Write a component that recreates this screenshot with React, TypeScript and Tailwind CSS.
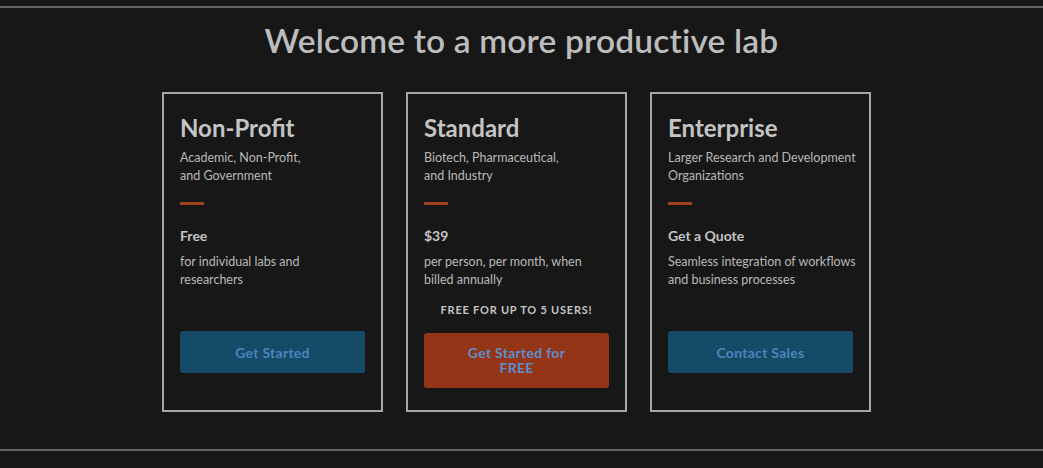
import React from "react";

const font = { fontFamily: "Lato, 'Noto Sans', sans-serif" };

function Card({
  title,
  sub,
  price,
  desc,
  extra,
  button,
  orange,
}: {
  title: string;
  sub: React.ReactNode;
  price: string;
  desc: React.ReactNode;
  extra?: string;
  button: React.ReactNode;
  orange?: boolean;
}) {
  return (
    <div className="w-[221px] h-[320px] border-2 border-[#a3a8a5] bg-[#171717] px-[16px] pt-[19px] flex flex-col">
      <h2 className="text-[24px] leading-[30px] font-bold text-[#c4c4c4]">{title}</h2>
      <p className="mt-[6px] text-[12.5px] leading-[18px] text-[#b9b9b9] whitespace-nowrap">{sub}</p>
      <div className="mt-[17px] h-[3px] w-[24px] bg-[#a3401f]" />
      <p className="mt-[21px] text-[14px] leading-[20px] font-bold text-[#c4c4c4]">{price}</p>
      <p className="mt-[7px] text-[12.5px] leading-[18px] text-[#b9b9b9] whitespace-nowrap">{desc}</p>
      {extra ? (
        <p className="mt-[13px] text-center text-[11px] leading-[16px] font-bold tracking-[0.07em] text-[#c4c4c4]">
          {extra}
        </p>
      ) : null}
      <button
        className={
          orange
            ? "mt-[15px] h-[55px] rounded-[3px] bg-[#943517] text-[#5b8fcc] font-bold text-[14px] leading-[14.5px] tracking-[0.02em] flex items-center justify-center text-center"
            : "mt-auto mb-[37px] h-[42px] rounded-[3px] bg-[#154b66] text-[#4a86bd] font-bold text-[14px] tracking-[0.02em]"
        }
      >
        <span>{button}</span>
      </button>
    </div>
  );
}

export default function App() {
  return (
    <div className="w-[1043px] h-[468px] bg-[#171717] overflow-hidden" style={font}>
      <div className="h-[6px]" />
      <div className="h-[2px] bg-[#5f6461]" />
      <h1 className="mt-[14px] text-center text-[33.5px] leading-[36px] font-semibold text-[#bdbdbd] tracking-[0.005em]">
        Welcome to a more productive lab
      </h1>
      <div className="mt-[34px] flex justify-center gap-[23px] pr-[10px]">
        <Card
          title="Non-Profit"
          sub={<>Academic, Non-Profit,<br />and Government</>}
          price="Free"
          desc={<>for individual labs and<br />researchers</>}
          button="Get Started"
        />
        <Card
          title="Standard"
          sub={<>Biotech, Pharmaceutical,<br />and Industry</>}
          price="$39"
          desc={<>per person, per month, when<br />billed annually</>}
          extra="FREE FOR UP TO 5 USERS!"
          button={<>Get Started for<br />FREE</>}
          orange
        />
        <Card
          title="Enterprise"
          sub={<>Larger Research and Development<br />Organizations</>}
          price="Get a Quote"
          desc={<>Seamless integration of workflows<br />and business processes</>}
          button="Contact Sales"
        />
      </div>
      <div className="mt-[37px] h-[2px] bg-[#5f6461]" />
    </div>
  );
}
